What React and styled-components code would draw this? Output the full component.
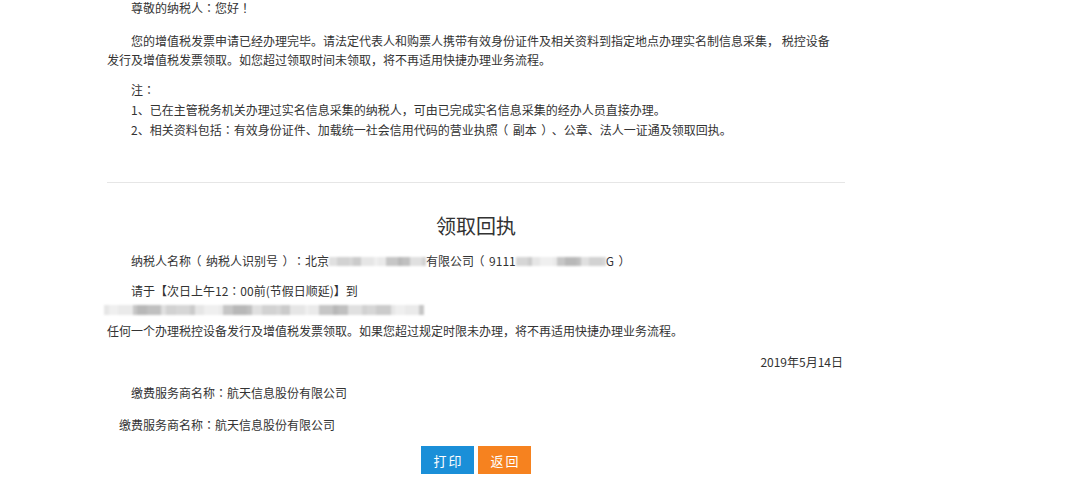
import React from "react";
import styled, { createGlobalStyle } from "styled-components";

const Global = createGlobalStyle`
  html, body { margin: 0; padding: 0; background: #fff; }
  body {
    font-family: "Noto Sans CJK SC", "Noto Sans", sans-serif;
    color: #333;
    font-size: 12px;
  }
`;

const Page = styled.div`
  width: 738px;
  margin-left: 107px;
`;

const Para = styled.p`
  margin: ${(p) => p.$mt || 0}px 0 0;
  line-height: ${(p) => p.$lh || 20}px;
  text-indent: ${(p) => (p.$indent === undefined ? 24 : p.$indent)}px;
  padding-left: ${(p) => p.$pl || 0}px;
  padding-right: ${(p) => p.$pr || 0}px;
  text-align: ${(p) => p.$align || "left"};
`;

const NoteBlock = styled.div`
  margin-top: 11px;
  padding-left: 24px;
  line-height: 20px;
`;

const Line = styled.div`
  line-height: 20px;
`;

const Divider = styled.hr`
  margin: 42px 0 0;
  border: none;
  border-top: 1px solid #e6e6e6;
  height: 0;
`;

const Title = styled.h2`
  margin: 28px 0 0;
  font-size: 20px;
  line-height: 30px;
  font-weight: normal;
  text-align: center;
  color: #333;
`;

const Punct = styled.span`
  font-family: "Noto Sans CJK TC", "Noto Sans CJK SC", sans-serif;
`;

const Paren = styled.span`
  display: inline-block;
  width: 15px;
  text-indent: 0;
  text-align: center;
  font-feature-settings: "halt" 1;
`;

const Blur = styled.span`
  display: inline-flex;
  align-items: center;
  vertical-align: middle;
  height: 12px;
  width: ${(p) => p.$w}px;
  margin-top: -2px;
  text-indent: 0;
  filter: blur(1.1px);
`;

const Cell = styled.span`
  flex: ${(p) => p.$f} 0 0;
  height: ${(p) => p.$h || 9}px;
  background: ${(p) => p.$c};
`;

const BlurLine = styled.div`
  height: 20px;
  display: flex;
  align-items: center;
  margin-left: -3px;
`;

const Buttons = styled.div`
  margin-top: 11px;
  display: flex;
  justify-content: center;
  gap: 4px;
`;

const Button = styled.button`
  width: 53px;
  height: 28px;
  border: none;
  border-radius: 0;
  padding: 0 0 0 2px;
  font-family: "Noto Sans CJK SC", sans-serif;
  font-size: 13px;
  letter-spacing: 2px;
  color: #fff;
  background: ${(p) => p.$bg};
  cursor: pointer;
`;

const shades = ["#e0e0e0", "#cbcbcb", "#eaeaea", "#c0c0c0", "#d6d6d6", "#efefef", "#b8b8b8", "#d2d2d2", "#e6e6e6", "#c6c6c6"];

function Blurred({ w, n, seed = 1, h }) {
  const cells = [];
  let s = seed;
  for (let i = 0; i < n; i++) {
    s = (s * 9301 + 49297) % 233280;
    const c = shades[s % shades.length];
    const f = 1 + (s % 3);
    cells.push(<Cell key={i} $f={f} $c={c} $h={h} />);
  }
  return <Blur $w={w}>{cells}</Blur>;
}

function T({ children }) {
  const parts = String(children).split(/([：！（）])/);
  return parts.map((p, i) => {
    if (p === "（" || p === "）") return <Paren key={i}>{p}</Paren>;
    if (p === "：" || p === "！") return <Punct key={i}>{p}</Punct>;
    return <React.Fragment key={i}>{p}</React.Fragment>;
  });
}

export default function App() {
  return (
    <>
      <Global />
      <Page>
        <Para $lh={16}><T>尊敬的纳税人：您好！</T></Para>
        <Para $mt={15} $lh={19} $pr={4}>
          您的增值税发票申请已经办理完毕。请法定代表人和购票人携带有效身份证件及相关资料到指定地点办理实名制信息采集， 税控设备发行及增值税发票领取。如您超过领取时间未领取，将不再适用快捷办理业务流程。
        </Para>
        <NoteBlock>
          <Line><T>注：</T></Line>
          <Line>1、已在主管税务机关办理过实名信息采集的纳税人，可由已完成实名信息采集的经办人员直接办理。</Line>
          <Line><T>2、相关资料包括：有效身份证件、加载统一社会信用代码的营业执照（副本）、公章、法人一证通及领取回执。</T></Line>
        </NoteBlock>
        <Divider />
        <Title>领取回执</Title>
        <Para $mt={10}>
          <T>纳税人名称（纳税人识别号）：北京</T><Blurred w={97} n={12} seed={3} /><T>有限公司（9111</T><Blurred w={90} n={11} seed={7} /><T>G）</T>
        </Para>
        <Para $mt={10}><T>请于【次日上午12：00前(节假日顺延)】到</T></Para>
        <BlurLine>
          <Blurred w={320} n={34} seed={11} h={10} />
        </BlurLine>
        <Para $indent={0}>任何一个办理税控设备发行及增值税发票领取。如果您超过规定时限未办理，将不再适用快捷办理业务流程。</Para>
        <Para $mt={11} $indent={0} $align="right" $pr={2}>2019年5月14日</Para>
        <Para $mt={11}><T>缴费服务商名称：航天信息股份有限公司</T></Para>
        <Para $mt={12} $indent={0} $pl={12}><T>缴费服务商名称：航天信息股份有限公司</T></Para>
        <Buttons>
          <Button $bg="#1a8fd8">打印</Button>
          <Button $bg="#f6821f">返回</Button>
        </Buttons>
      </Page>
    </>
  );
}
